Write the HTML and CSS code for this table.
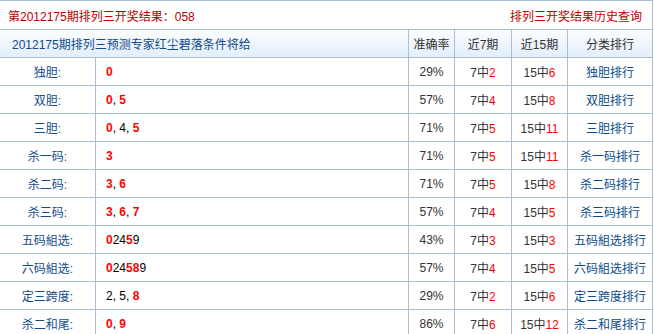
FILE: index.html
```html
<!DOCTYPE html>
<html lang="zh-CN">
<head>
<meta charset="utf-8">
<title>排列三预测</title>
<link rel="stylesheet" href="styles.css">
</head>
<body>
<div class="topbar">
  <span class="result">第2012175期排列三开奖结果：058</span>
  <a class="history" href="#">排列三开奖结果历史查询</a>
</div>
<table class="pred">
  <colgroup>
    <col class="c1"><col class="c2"><col class="c3"><col class="c4"><col class="c5"><col class="c6">
  </colgroup>
  <thead>
    <tr class="head">
      <th colspan="2" class="title">2012175期排列三预测专家红尘碧落条件将给</th>
      <th>准确率</th><th>近7期</th><th>近15期</th><th>分类排行</th>
    </tr>
  </thead>
  <tbody>
    <tr><td class="lbl">独胆:</td><td class="val"><b>0</b></td><td>29%</td><td>7中<i>2</i></td><td>15中<i>6</i></td><td><a href="#">独胆排行</a></td></tr>
    <tr><td class="lbl">双胆:</td><td class="val"><b>0</b>, <b>5</b></td><td>57%</td><td>7中<i>4</i></td><td>15中<i>8</i></td><td><a href="#">双胆排行</a></td></tr>
    <tr><td class="lbl">三胆:</td><td class="val"><b>0</b>, 4, <b>5</b></td><td>71%</td><td>7中<i>5</i></td><td>15中<i>11</i></td><td><a href="#">三胆排行</a></td></tr>
    <tr><td class="lbl">杀一码:</td><td class="val"><b>3</b></td><td>71%</td><td>7中<i>5</i></td><td>15中<i>11</i></td><td><a href="#">杀一码排行</a></td></tr>
    <tr><td class="lbl">杀二码:</td><td class="val"><b>3</b>, <b>6</b></td><td>71%</td><td>7中<i>5</i></td><td>15中<i>8</i></td><td><a href="#">杀二码排行</a></td></tr>
    <tr><td class="lbl">杀三码:</td><td class="val"><b>3</b>, <b>6</b>, <b>7</b></td><td>57%</td><td>7中<i>4</i></td><td>15中<i>5</i></td><td><a href="#">杀三码排行</a></td></tr>
    <tr><td class="lbl">五码組选:</td><td class="val"><b>0</b>24<b>5</b>9</td><td>43%</td><td>7中<i>3</i></td><td>15中<i>3</i></td><td><a href="#">五码組选排行</a></td></tr>
    <tr><td class="lbl">六码組选:</td><td class="val"><b>0</b>24<b>58</b>9</td><td>57%</td><td>7中<i>4</i></td><td>15中<i>5</i></td><td><a href="#">六码組选排行</a></td></tr>
    <tr><td class="lbl">定三跨度:</td><td class="val">2, 5, <b>8</b></td><td>29%</td><td>7中<i>2</i></td><td>15中<i>6</i></td><td><a href="#">定三跨度排行</a></td></tr>
    <tr><td class="lbl">杀二和尾:</td><td class="val"><b>0</b>, <b>9</b></td><td>86%</td><td>7中<i>6</i></td><td>15中<i>12</i></td><td><a href="#">杀二和尾排行</a></td></tr>
  </tbody>
</table>
</body>
</html>
```
FILE: styles.css
```css
html, body {
  margin: 0;
  padding: 0;
  background: #fff;
}
body {
  font-family: "Liberation Sans", "Noto Sans CJK SC", sans-serif;
  font-size: 12px;
  color: #333;
}
.topbar {
  box-sizing: border-box;
  width: 653px;
  height: 30px;
  border-top: 1px solid #a9bfd7;
  border-right: 1px solid #a9bfd7;
  border-bottom: 1px solid #a9bfd7;
  display: flex;
  align-items: center;
  justify-content: space-between;
  padding: 0 10px 0 8px;
}
.result, .history {
  color: #b80000;
  text-decoration: none;
}
.pred {
  width: 653px;
  table-layout: fixed;
  border-collapse: separate;
  border-spacing: 0;
}
.c1 { width: 96px; }
.c2 { width: 313px; }
.c3 { width: 46px; }
.c4 { width: 57px; }
.c5 { width: 56px; }
.c6 { width: 85px; }
.pred th, .pred td {
  padding: 0;
  border-right: 1px solid #a9bfd7;
  border-bottom: 1px solid #a9bfd7;
  text-align: center;
  white-space: nowrap;
  overflow: hidden;
}
.pred tr { height: 28px; }
.head th {
  font-weight: normal;
  color: #333;
  background: linear-gradient(#fcfdfe, #e3eefa);
}
.head .title {
  text-align: left;
  padding-left: 12px;
  color: #0f4a8c;
}
.lbl { color: #134c8c; }
.pred td.val {
  text-align: left;
  padding-left: 10px;
  color: #000;
}
.val b {
  color: #ff0000;
  font-weight: bold;
}
.pred i {
  font-style: normal;
  color: #ff0000;
}
.pred a {
  color: #0b4a8c;
  text-decoration: none;
}
```
